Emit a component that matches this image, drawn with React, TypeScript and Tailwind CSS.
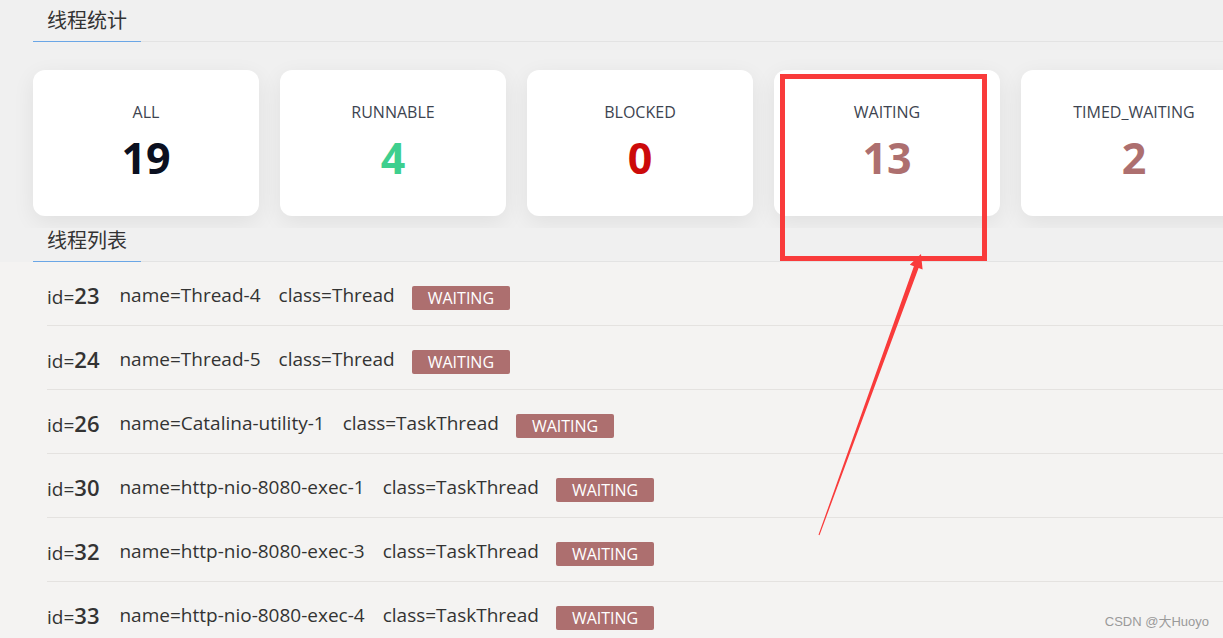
import React from 'react';

const stats = [
  { label: 'ALL', value: 19, color: 'text-[#0b1020]' },
  { label: 'RUNNABLE', value: 4, color: 'text-[#3ecf8e]' },
  { label: 'BLOCKED', value: 0, color: 'text-[#cc0a0a]' },
  { label: 'WAITING', value: 13, color: 'text-[#ad6f6f]' },
  { label: 'TIMED_WAITING', value: 2, color: 'text-[#ad6f6f]' },
];

const threads = [
  { id: 23, name: 'Thread-4', cls: 'Thread', state: 'WAITING' },
  { id: 24, name: 'Thread-5', cls: 'Thread', state: 'WAITING' },
  { id: 26, name: 'Catalina-utility-1', cls: 'TaskThread', state: 'WAITING' },
  { id: 30, name: 'http-nio-8080-exec-1', cls: 'TaskThread', state: 'WAITING' },
  { id: 32, name: 'http-nio-8080-exec-3', cls: 'TaskThread', state: 'WAITING' },
  { id: 33, name: 'http-nio-8080-exec-4', cls: 'TaskThread', state: 'WAITING' },
];

function SectionTitle({ title }: { title: string }) {
  return (
    <div className="flex items-end pl-[33px]">
      <div className="w-[108px] border-b border-[#6aa6e6] pl-[14px] pb-[7px] text-[20px] leading-[26px] text-[#333]">
        {title}
      </div>
      <div className="flex-1 border-b border-[#e3e3e3]" />
    </div>
  );
}

export default function App() {
  return (
    <div
      className="relative h-[638px] w-full overflow-hidden bg-[#f4f3f2]"
      style={{ fontFamily: '"Open Sans", "Noto Sans CJK SC", sans-serif' }}
    >
      <div className="bg-[#f0f0f0] pt-[8px]">
        <SectionTitle title="线程统计" />
        <div className="flex gap-[21px] overflow-hidden pl-[33px] pt-[28px] pb-[12px]">
          {stats.map((s) => (
            <div
              key={s.label}
              className="flex h-[146px] w-[226px] shrink-0 flex-col items-center rounded-[12px] bg-white pt-[31px] shadow-[0_6px_22px_rgba(0,0,0,0.07)]"
            >
              <div className="text-[16px] leading-[22px] text-[#3d4450]">{s.label}</div>
              <div className={`mt-[10px] text-[43px] font-bold leading-[50px] ${s.color}`}>{s.value}</div>
            </div>
          ))}
        </div>
        <SectionTitle title="线程列表" />
      </div>

      <ul className="ml-[47px]">
        {threads.map((t) => (
          <li
            key={t.id}
            className="flex h-[64px] items-center border-b border-[#e4e2e0] pt-[4px] text-[19px] text-[#333]"
          >
            <span>
              id=<span className="text-[22px] font-semibold">{t.id}</span>
            </span>
            <span className="ml-[20px]">name={t.name}</span>
            <span className="ml-[18px]">class={t.cls}</span>
            <span className="ml-[17px] mt-[4px] flex h-[24px] items-center rounded-[2px] bg-[#ad6f6f] px-[16px] text-[16px] text-white">
              {t.state}
            </span>
          </li>
        ))}
      </ul>

      {/* annotation */}
      <div className="absolute left-[780px] top-[74px] h-[187px] w-[207px] border-[5px] border-[#f93b3b]" />
      <svg className="absolute left-0 top-0" width="1223" height="638" viewBox="0 0 1223 638">
        <polygon
          points="818.5,534.8 913.9,266.3 909.8,264.8 921,254 922.6,269.5 918.6,268 819.5,535.2"
          fill="#f93b3b"
        />
      </svg>

      <div
        className="absolute right-[14px] top-[612px] text-[13px] text-[#9a9a9a]"
        style={{ fontFamily: '"Liberation Sans", "Noto Sans CJK SC", sans-serif' }}
      >
        CSDN @大Huoyo
      </div>
    </div>
  );
}
